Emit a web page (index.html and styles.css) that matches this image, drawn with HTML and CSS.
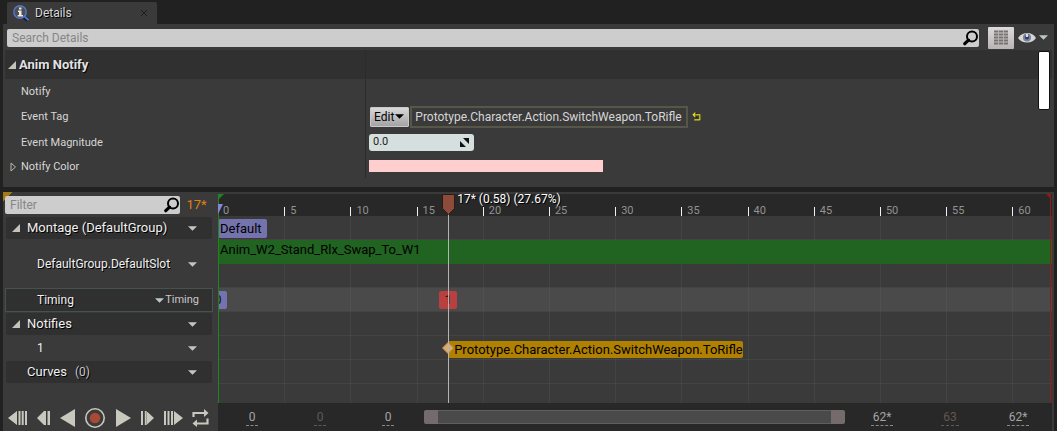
FILE: index.html
```html
<!DOCTYPE html>
<html lang="en">
<head>
<meta charset="utf-8">
<title>Details</title>
<link rel="stylesheet" href="styles.css">
</head>
<body>
<svg class="defs" width="0" height="0" aria-hidden="true">
  <symbol id="magnifier" viewBox="0 0 16 16">
    <circle cx="9" cy="6.500" r="5" fill="none" stroke="#000" stroke-width="2"/>
    <path d="M5.500 10.200 1.800 13.700" stroke="#000" stroke-width="3.200" stroke-linecap="round"/>
  </symbol>
  <symbol id="caret" viewBox="0 0 8 4"><path d="M0 0h8L4 4z" fill="currentColor"/></symbol>
  <symbol id="expanded" viewBox="0 0 8 8"><path d="M8 0v8H0z" fill="currentColor"/></symbol>
</svg>

<nav class="tabs">
  <div class="tab">
    <svg class="tab-icon" viewBox="0 0 17 17" aria-hidden="true">
      <path d="m11 12 4 3" stroke="#14161c" stroke-width="4"/>
      <circle cx="7" cy="7" r="6.200" fill="#4c4f55" stroke="#5478c8" stroke-width="1.400"/>
      <path d="m11 11 4.500 4" stroke="#4a78dc" stroke-width="2"/>
      <path d="M6 2.500h2.500v2H6zM5 5.500h3.500v4.500H10V11.500H4.700V10H6V7H5z" fill="#f0ece4"/>
    </svg>
    <span class="tab-title">Details</span>
    <button class="tab-close" aria-label="Close tab"><svg viewBox="0 0 6 6"><path d="m0 0 6 6M6 0 0 6" stroke="#1c1c1c"/></svg></button>
  </div>
</nav>

<section class="details">
  <div class="toolbar">
    <label class="search">
      <input type="text" placeholder="Search Details" aria-label="Search Details">
      <svg class="search-icon"><use href="#magnifier"/></svg>
    </label>
    <button class="matrix" aria-label="Property matrix">
      <svg viewBox="0 0 14 15"><path d="M0 1.500h14M0 4.500h14M0 7.500h14M0 10.500h14M0 13.500h14" stroke="#77716f" stroke-width="2"/><path d="M4.500 0v15M9.500 0v15" stroke="#b4b0b0"/></svg>
    </button>
    <button class="view" aria-label="View options">
      <svg class="eye" viewBox="0 0 18 12"><path d="M0 6C4 0 14-1 18 6 14 12 4 12 0 6z" fill="#d6d6d6"/><circle cx="9" cy="5.500" r="4" fill="#78819d"/><circle cx="9" cy="5.500" r="2" fill="#2c3c64"/><path d="M8 2h2v3H8z" fill="#dcdfe6"/></svg>
      <svg class="caret"><use href="#caret"/></svg>
    </button>
  </div>
  <div class="properties">
    <div class="prop prop-head">
      <button class="prop-name"><svg class="expander"><use href="#expanded"/></svg>Anim Notify</button>
      <div class="prop-value"></div>
    </div>
    <div class="prop">
      <span class="prop-name inset">Notify</span>
      <div class="prop-value"></div>
    </div>
    <div class="prop tall">
      <span class="prop-name inset">Event Tag</span>
      <div class="prop-value">
        <button class="edit">Edit<svg class="caret"><use href="#caret"/></svg></button>
        <span class="tag">Prototype.Character.Action.SwitchWeapon.ToRifle</span>
        <button class="reset" aria-label="Reset to default"><svg viewBox="0 0 8 8"><path d="M2 7.500h5V2.500H1M3 .500l-2 2 2 2" fill="none" stroke="#111" transform="translate(1 .500)"/><path d="M2 7h5V2.500H1M3 .500l-2 2 2 2" fill="none" stroke="#e6de28"/></svg></button>
      </div>
    </div>
    <div class="prop">
      <label class="prop-name inset" for="magnitude">Event Magnitude</label>
      <div class="prop-value">
        <span class="number">
          <input id="magnitude" type="text" value="0.0">
          <svg viewBox="0 0 9 9" aria-hidden="true"><path d="M3 0h6v6zM0 3v6h6z" fill="#111"/></svg>
        </span>
      </div>
    </div>
    <div class="prop">
      <button class="prop-name"><svg class="expander hollow" viewBox="0 0 8 10"><path d="M2.500 1v8L7 5z" fill="none" stroke="#b8b8ae"/></svg>Notify Color</button>
      <div class="prop-value"><button class="swatch" aria-label="Notify color"></button></div>
    </div>
    <div class="scroll-thumb"></div>
  </div>
</section>

<section class="timeline">
  <aside class="outliner">
    <div class="filter-row">
      <label class="search">
        <input type="text" placeholder="Filter" aria-label="Filter">
        <svg class="search-icon"><use href="#magnifier"/></svg>
      </label>
      <span class="frame">17*</span>
    </div>
    <div class="track-name group">
      <button class="twisty" aria-label="Collapse Montage"><svg class="expander"><use href="#expanded"/></svg></button>
      <span>Montage (DefaultGroup)</span>
      <button class="menu" aria-label="Montage menu"><svg class="caret"><use href="#caret"/></svg></button>
    </div>
    <div class="track-name child double">
      <span>DefaultGroup.DefaultSlot</span>
      <button class="menu" aria-label="Slot menu"><svg class="caret"><use href="#caret"/></svg></button>
    </div>
    <div class="track-name child selected">
      <span>Timing</span>
      <button class="menu timing"><svg class="caret"><use href="#caret"/></svg>Timing</button>
    </div>
    <div class="track-name group">
      <button class="twisty" aria-label="Collapse Notifies"><svg class="expander"><use href="#expanded"/></svg></button>
      <span>Notifies</span>
      <button class="menu" aria-label="Notifies menu"><svg class="caret"><use href="#caret"/></svg></button>
    </div>
    <div class="track-name child plain">
      <span>1</span>
      <button class="menu" aria-label="Track 1 menu"><svg class="caret"><use href="#caret"/></svg></button>
    </div>
    <div class="track-name group">
      <span class="curves">Curves</span><small>(0)</small>
      <button class="menu" aria-label="Curves menu"><svg class="caret"><use href="#caret"/></svg></button>
    </div>
    <div class="transport">
      <button aria-label="To front"><svg width="20" height="14" viewBox="0 0 20 14"><path d="M0 7 9 0v14zM10.500 0h2v14h-2zM13.700 0h2v14h-2zM17 0h2v14h-2z"/></svg></button>
      <button aria-label="Step back"><svg width="14" height="14" viewBox="0 0 14 14"><path d="M0 7 7 0v14zM7 0h2v14H7zM10.500 0h2.500v14h-2.500z"/></svg></button>
      <button aria-label="Play reverse"><svg width="16" height="18" viewBox="0 0 16 18"><path d="M0 9 15 0v18z"/></svg></button>
      <button aria-label="Record"><svg width="20" height="20" viewBox="0 0 20 20"><circle cx="10" cy="10" r="9.200" fill="none" stroke="#c8c8be" stroke-width="1.600"/><circle cx="10" cy="10" r="5.300" fill="#a84836"/></svg></button>
      <button aria-label="Play"><svg width="16" height="18" viewBox="0 0 16 18"><path d="m16 9-15-9v18z"/></svg></button>
      <button aria-label="Step forward"><svg width="14" height="14" viewBox="0 0 14 14"><path d="M14 7 6.500 0v14zM1 0h2v14H1zM4.800 0h2v14h-2z"/></svg></button>
      <button aria-label="To end"><svg width="20" height="14" viewBox="0 0 20 14"><path d="m20 7-9-7v14zM1 0h2v14H1zM4.500 0h2v14h-2zM8 0h2v14H8z"/></svg></button>
      <button aria-label="Loop"><svg width="17" height="18" viewBox="0 0 17 18"><path d="M1.500 8V4H13M15.500 9.500v5H4" fill="none" stroke="#c8c8be" stroke-width="2.200"/><path d="m12 0 4.500 4L12 8zM5 10.500l-4.500 4L5 18z"/></svg></button>
    </div>
  </aside>

  <div class="stage">
    <div class="ruler">
      <span class="start">0</span><span>5</span><span>10</span><span>15</span><span>20</span><span>25</span><span>30</span><span>35</span><span>40</span><span>45</span><span>50</span><span>55</span><span>60</span>
    </div>
    <div class="tracks">
      <div class="lane"><span class="section">Default</span></div>
      <div class="lane anim">Anim_W2_Stand_Rlx_Swap_To_W1</div>
      <div class="lane"></div>
      <div class="lane lit"><span class="badge first">0</span><span class="badge event" style="left:27.6%">1</span></div>
      <div class="lane"></div>
      <div class="lane"><span class="notify" style="left:27.6%"><svg class="diamond" viewBox="0 0 12 12"><path d="m6 .500 5.500 5.500L6 11.500.500 6z" fill="#d2ad7c" stroke="#d88a3c"/></svg>Prototype.Character.Action.SwitchWeapon.ToRifle</span></div>
      <div class="lane"></div>
      <div class="lane last"></div>
      <div class="gridlines"><i></i><i></i><i></i><i></i><i></i><i></i><i></i><i></i><i></i><i></i><i></i><i></i><i></i></div>
    </div>
    <div class="range-start"></div>
    <div class="range-end"></div>
    <div class="playhead" style="left:27.6%">
      <svg viewBox="0 0 13 21"><path d="M.500.500h12v14l-6 6-6-6z" fill="#8d4b39" stroke="#2c1a14"/></svg>
      <output>17* (0.58) (27.67%)</output>
    </div>
    <div class="range-bar">
      <input type="text" value="0" aria-label="Range start">
      <input class="dim" type="text" value="0" aria-label="View start">
      <input type="text" value="0" aria-label="Current start">
      <div class="range-slider"></div>
      <input type="text" value="62*" aria-label="Current end">
      <input class="dim warm" type="text" value="63" aria-label="View end">
      <input type="text" value="62*" aria-label="Range end">
    </div>
  </div>
</section>
</body>
</html>
```
FILE: styles.css
```css
* { box-sizing: border-box; }
body {
  margin: 0;
  padding: 2px 3px 0;
  min-height: 100vh;
  display: flex;
  flex-direction: column;
  background: #212121;
  color: #d6d6d6;
  font: 13px/16px Roboto, sans-serif;
}
button {
  border: 0;
  padding: 0;
  background: none;
  color: inherit;
  font: inherit;
  display: flex;
  align-items: center;
}
svg { display: block; flex: none; }
.defs { position: absolute; }
.caret { width: 9px; height: 5px; color: #bcc8c4; }
.expander { width: 8px; height: 8px; color: #c4c4ba; }
.expander.hollow { width: 9px; height: 10px; }

.tabs { display: flex; padding-left: 4px; }
.tab {
  display: flex;
  align-items: center;
  width: 150px;
  height: 22px;
  padding: 0 10px 0 6px;
  background: #3a3a3a;
  border-radius: 2px 2px 0 0;
  text-shadow: 1px 1px 0 #000;
  font-size: 12px;
}
.tab-icon { width: 17px; height: 17px; }
.tab-title { margin-left: 5px; flex: 1; }
.tab-close svg { width: 6px; height: 6px; }

.details { background: #3a3a3a; height: 163px; padding: 3px 2px 0; }
.toolbar { display: flex; align-items: center; height: 23px; padding: 0 4px 2px 2px; }
.search {
  flex: 1;
  min-width: 0;
  display: flex;
  align-items: center;
  height: 18px;
  padding: 0 0 0 5px;
  background: #cdcdcd;
  border-radius: 2px;
}
.search input {
  flex: 1;
  min-width: 0;
  border: 0;
  padding: 0;
  background: none;
  font: inherit;
  font-size: 12px;
  outline: 0;
}
.search input::placeholder { color: #868686; opacity: 1; }
.search-icon { width: 16px; height: 16px; }
.matrix {
  width: 26px;
  height: 22px;
  margin: 0 4px 0 9px;
  justify-content: center;
  background: linear-gradient(#dcdadb, #b8b4b6);
  border-radius: 1px;
}
.matrix svg { width: 14px; height: 15px; }
.view { gap: 3px; }
.eye { width: 18px; height: 12px; }

.properties { position: relative; }
.prop { display: grid; grid-template-columns: 360px 1fr; height: 24px; font-size: 11px; }
.prop.tall { height: 27px; }
.prop-name { display: flex; align-items: center; gap: 4px; padding: 1px 0 0 3px; }
.prop-name.inset { padding-left: 16px; }
.prop-value { display: flex; align-items: center; padding-left: 3px; border-left: 1px solid #2b2b2b; }
.prop-head { height: 29px; background: #303030; }
.prop-head .prop-name { font-size: 13px; font-weight: 700; text-shadow: 1px 1px 0 #000; color: #e2e2e2; gap: 3px; }
.edit {
  height: 20px;
  margin-left: 1px;
  padding: 0 4px 0 3px;
  gap: 1px;
  background: linear-gradient(#d8d8d8, #a4a4a4);
  border: 1px solid #c8c8c8;
  border-radius: 1px;
  color: #000;
  font-size: 12px;
}
.edit .caret { color: #000; height: 5px; }
.tag { margin-left: 1px; padding: 1px 4px 1px 3px; border: 2px solid #565649; font-size: 12px; }
.reset { margin-left: 4px; }
.reset svg { width: 9px; height: 9px; }
.number {
  display: flex;
  align-items: center;
  width: 105px;
  height: 17px;
  padding: 0 5px 0 4px;
  background: #d5dfdd;
  border-radius: 3px;
}
.number input { flex: 1; min-width: 0; border: 0; padding: 0; background: none; font: inherit; color: #222; }
.number svg { width: 9px; height: 9px; }
.swatch { width: 234px; height: 12px; background: #ffcece; }
.scroll-thumb {
  position: absolute;
  top: 1px;
  right: 2px;
  width: 12px;
  height: 59px;
  background: #fff;
  border: 1px solid #111;
  border-radius: 2px;
}

.timeline {
  flex: 1;
  margin-top: 5px;
  padding-right: 2px;
  display: grid;
  grid-template-columns: 215px minmax(0, 1fr);
  background: linear-gradient(135deg, #a07c18 7px, transparent 7px) no-repeat #3a3a3a;
}
.outliner { display: flex; flex-direction: column; padding: 4px 5px 0 2px; }
.filter-row { display: flex; align-items: center; height: 20px; padding-bottom: 2px; }
.filter-row .search { flex: none; width: 175px; }
.frame { flex: 1; text-align: center; color: #e08010; }
.track-name {
  display: flex;
  align-items: center;
  height: 24px;
  padding: 0 15px 0 6px;
  border: 1px solid transparent;
  color: #f0f0f0;
  text-shadow: 1px 1px 0 #000;
  background-clip: padding-box;
  border-radius: 3px;
}
.group { background-color: #303030; }
.twisty { width: 15px; }
.group > .curves { margin-left: 15px; }
.track-name small { margin-left: 8px; font-size: 12px; color: #c4c4c4; }
.child { padding-left: 31px; font-size: 12px; }
.double { height: 48px; }
.plain { text-shadow: none; }
.selected { background-color: #303030; border-color: #46524e; border-radius: 0; padding-right: 13px; }
.menu { margin-left: auto; }
.menu.timing { gap: 1px; font-size: 11px; color: #c8c8c8; text-shadow: none; }
.transport {
  flex: 1;
  display: flex;
  align-items: center;
  justify-content: space-between;
  margin-top: 20px;
  padding: 0 4px 0 3px;
}
.transport svg { fill: #c8c8be; }

.stage { position: relative; display: flex; flex-direction: column; padding-top: 2px; overflow: hidden; }
.ruler, .gridlines { display: grid; grid-template-columns: repeat(12, minmax(0, 5fr)) minmax(0, 3fr); }
.ruler { height: 22px; padding-top: 13px; background: #282828; color: #929292; font-size: 11px; line-height: 8px; }
.ruler span { border-left: 1px solid #f0f0f0; padding-left: 5px; }
.ruler .start { border-color: transparent; padding-left: 4px; }
.tracks { position: relative; flex: 1; }
.lane {
  position: relative;
  height: 24px;
  border-bottom: 1px solid #444;
}
.lane.last { height: 19px; border: 0; }
.lit { background: #4a4a4a; }
.gridlines { position: absolute; inset: 0; pointer-events: none; z-index: 0; }
.gridlines i { border-left: 1px solid rgba(110, 130, 120, .15); }
.section {
  display: inline-block;
  margin-top: 3px;
  padding: 2px 5px 1px 2px;
  background: #7473ad;
  border-radius: 2px;
  color: #000;
}
.anim { z-index: 1; padding: 2px 2px; background: #216321; border: 0; color: #000; }
.badge {
  position: absolute;
  top: 3px;
  width: 18px;
  height: 18px;
  line-height: 18px;
  text-align: center;
  color: #111;
  border-radius: 2px;
}
.first { left: -9px; background: #7473ad; }
.event { margin-left: -9px; background: #b94040; }
.notify {
  position: absolute;
  z-index: 1;
  top: 5px;
  height: 17px;
  line-height: 17px;
  padding: 0 0 0 6px;
  background: #b08000;
  border-radius: 2px;
  color: #000;
  white-space: nowrap;
}
.diamond { position: absolute; left: -6px; top: 1px; width: 12px; height: 12px; }
.range-start, .range-end { position: absolute; top: 2px; bottom: 28px; z-index: 2; }
.range-start { left: 0; width: 1px; background: #1c861c; }
.range-start::before, .range-start::after, .range-end::before { content: ""; position: absolute; top: 0; left: 0; }
.range-start::before { border-top: 6px solid #1c861c; border-right: 6px solid transparent; }
.range-start::after { top: 10px; border-top: 10px solid #8886d8; border-right: 5px solid transparent; }
.range-end { right: 1px; width: 1px; background: #a01414; }
.range-end::before { left: auto; right: 0; border-top: 5px solid #9a1414; border-left: 5px solid transparent; }
.playhead { position: absolute; top: 2px; bottom: 28px; width: 1px; background: #b4b4b0; z-index: 3; }
.playhead svg { position: absolute; left: -6px; top: 0; width: 13px; height: 21px; }
.playhead output {
  position: absolute;
  left: 9px;
  top: -3px;
  white-space: nowrap;
  color: #fff;
  font-size: 12px;
  text-shadow: 1px 1px 0 #000;
}
.range-bar {
  display: grid;
  grid-template-columns: repeat(3, 68px) minmax(0, 1fr) repeat(3, 68px);
  align-items: center;
  justify-items: center;
  height: 28px;
  background: #282828;
}
.range-bar input {
  width: 22px;
  border: 0;
  border-bottom: 1px dashed #888;
  padding: 0;
  background: none;
  color: #a4a4a4;
  font: inherit;
  font-size: 12px;
  text-align: center;
}
.range-bar input[value="0"] { width: 12px; }
.range-bar input.dim { color: #5c5c58; border-color: #5c5c58; }
.range-bar input.warm { color: #655650; width: 18px; }
.range-slider {
  justify-self: stretch;
  height: 14px;
  margin: 0 3px 0 2px;
  background: #4a4a4a;
  border: solid #756b6c;
  border-width: 0 14px;
  border-radius: 2px;
  box-shadow: inset 0 1px #60605a, inset 0 -1px #60605a;
}
```
